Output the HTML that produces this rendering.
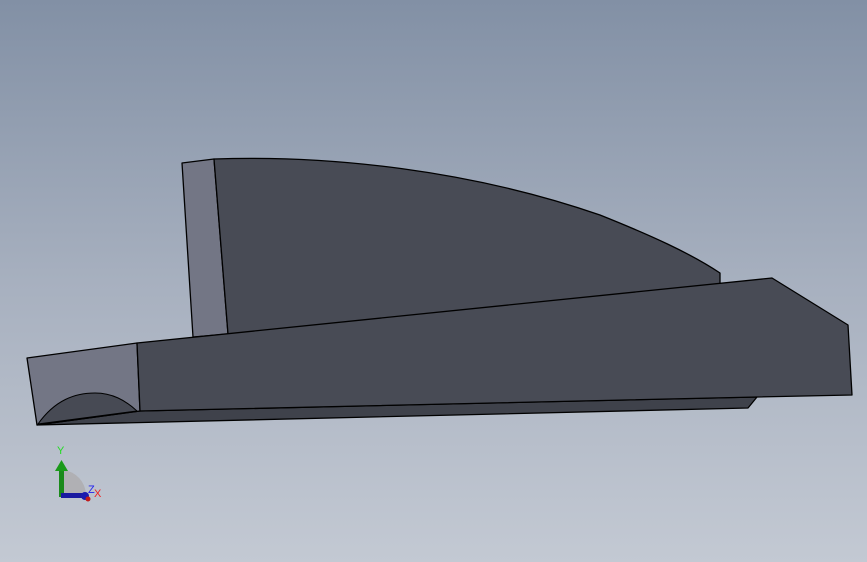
<!DOCTYPE html>
<html><head><style>
html,body{margin:0;padding:0;width:867px;height:562px;overflow:hidden}
body{background:linear-gradient(#8290a5 0%,#a7b0bf 50%,#c3c9d3 100%)}
</style></head><body>
<svg width="867" height="562" style="position:absolute;left:0;top:0">
<g stroke="#000" stroke-width="1.3" stroke-linejoin="round">
<polygon points="182,163 214,159 228,334 193,337" fill="#737685"/>
<path d="M214,159 C330,155 470,170 600,215 C650,235 690,253 720,273 L720,290 L228,334 Z" fill="#484b55"/>
<polygon points="37,425 140,411 757,397 748,408 37,425" fill="#3f424b"/>
<polygon points="27,358 137,343 140,411 37,425" fill="#737685"/>
<path d="M38,424 C55,400 75,393 95,393 C112,393 125,400 137,411 Z" fill="#474a54" stroke-width="1"/>
<polygon points="137,343 772,278 848,325 852,395 757,397 140,411" fill="#484b55"/>
</g>
<g>
<path d="M64,470 A26,26 0 0 1 86,494 L64,494 Z" fill="#b0b0b4"/>
<rect x="59" y="470" width="5" height="27" fill="#1a8a1a"/>
<polygon points="55,471 61.5,460 68,471" fill="#1a9a1a"/>
<rect x="61" y="493" width="26" height="5" fill="#1a1aa0"/>
<circle cx="85" cy="496" r="4" fill="#1a1ab0"/>
<circle cx="88" cy="499" r="2.5" fill="#c01a1a"/>
<text x="57" y="454" font-family="Liberation Sans,sans-serif" font-size="11" fill="#22dd22">Y</text>
<text x="88" y="493" font-family="Liberation Sans,sans-serif" font-size="11" fill="#2222ee">Z</text>
<text x="94" y="497" font-family="Liberation Sans,sans-serif" font-size="11" fill="#ee2222">X</text>
</g>
</svg>
</body></html>
